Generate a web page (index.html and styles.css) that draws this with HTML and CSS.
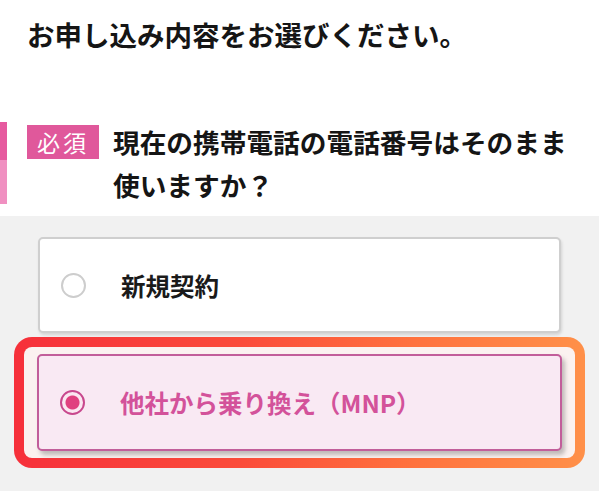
FILE: index.html
```html
<!DOCTYPE html>
<html lang="ja">
<head>
<meta charset="utf-8">
<link rel="stylesheet" href="styles.css">
</head>
<body>
<h1 class="title">お申し込み内容をお選びください。</h1>
<div class="question">
  <div class="qbar"></div>
  <span class="badge">必須</span>
  <p class="qtext">現在の携帯電話の電話番号はそのまま使いますか？</p>
</div>
<div class="options">
  <label class="option">
    <span class="radio"></span>
    <span class="otext">新規契約</span>
  </label>
  <div class="focus-ring">
    <label class="option selected">
      <span class="radio checked"></span>
      <span class="otext">他社から乗り換え（MNP）</span>
    </label>
  </div>
</div>
</body>
</html>
```
FILE: styles.css
```css
* { box-sizing: border-box; }
body {
  margin: 0;
  background: #fff;
  font-family: "Noto Sans CJK JP", "Noto Sans", sans-serif;
  color: #151515;
}
.title {
  margin: 0;
  padding: 14px 0 0 27px;
  font-size: 27.5px;
  line-height: 40px;
  font-weight: 700;
  letter-spacing: 0;
}
.question {
  display: flex;
  align-items: flex-start;
  margin-top: 66px;
  height: 96px;
}
.qbar {
  width: 7px;
  height: 82px;
  margin-top: 2px;
  background: linear-gradient(#e65a9f 0 46%, #f090c1 46% 100%);
  flex: none;
}
.badge {
  flex: none;
  margin-left: 20px;
  margin-top: 5px;
  width: 72px;
  height: 34px;
  background: #e0589b;
  color: #fff;
  font-size: 23px;
  line-height: 34px;
  text-align: center;
  letter-spacing: 3px;
  font-weight: 400;
}
.qtext {
  margin: 0 0 0 14px;
  font-size: 26.7px;
  line-height: 43px;
  font-weight: 700;
  width: 470px;
}
.options {
  background: #f1f1f1;
  padding: 21px 14px 30px;
}
.option {
  display: flex;
  align-items: center;
  margin: 0 24px;
  height: 96px;
  background: #fff;
  border: 2px solid #cfcfcf;
  border-radius: 5px;
  padding-left: 21px;
  box-shadow: 1px 2px 3px rgba(0,0,0,0.12);
}
.radio {
  flex: none;
  width: 25px;
  height: 25px;
  border: 2px solid #cdcdcd;
  border-radius: 50%;
  background: #fff;
}
.otext {
  margin-left: 35px;
  font-size: 24.5px;
  font-weight: 700;
  color: #1a1a1a;
}
.focus-ring {
  margin-top: 4px;
  border: 10px solid transparent;
  border-radius: 18px;
  padding: 7px 13px;
  background:
    linear-gradient(#fbf2f0, #fbf2f0) padding-box,
    linear-gradient(90deg, #f6303a 0%, #fb4c3a 40%, #ff723e 70%, #ff9049 100%) border-box;
}
.option.selected {
  margin: 0;
  height: 97px;
  background: #f9e9f3;
  border-color: #c25e9a;
  box-shadow: 3px 4px 4px rgba(80,80,80,0.35);
}
.radio.checked {
  border: 2px solid #c8488d;
  background: radial-gradient(circle, #e0407f 0 6.5px, #fbe7f1 7.5px);
}
.selected .otext {
  color: #d3529a;
}
```
